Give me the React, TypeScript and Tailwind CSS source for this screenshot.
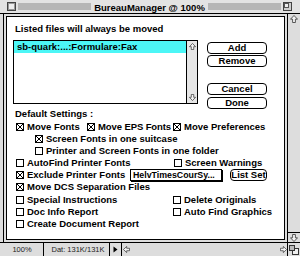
import type { ReactNode } from "react";

function CheckBox({ on }: { on?: boolean }) {
  return (
    <svg width="8" height="8" viewBox="0 0 8 8" className="shrink-0">
      <rect x="0.5" y="0.5" width="7" height="7" fill="white" stroke="black" />
      {on && <path d="M1 1L7 7M7 1L1 7" stroke="black" strokeWidth="1" />}
    </svg>
  );
}

function Opt({ on, label, className = "" }: { on?: boolean; label: string; className?: string }) {
  return (
    <div className={`flex h-[12px] shrink-0 items-center whitespace-nowrap ${className}`}>
      <CheckBox on={on} />
      <span className="ml-[3px]">{label}</span>
    </div>
  );
}

function Btn({ children, className = "" }: { children: ReactNode; className?: string }) {
  return (
    <div
      className={`flex h-[12px] items-center justify-center rounded-[4px] border border-black bg-white leading-[10px] ${className}`}
    >
      {children}
    </div>
  );
}

function Arrow({ dir, size = 8 }: { dir: "up" | "down" | "left" | "right"; size?: number }) {
  const rot = { up: 0, right: 90, down: 180, left: 270 }[dir];
  return (
    <svg width={size} height={size} viewBox="0 0 8 8" className="shrink-0">
      <g transform={`rotate(${rot} 4 4)`}>
        <path
          d="M4 0.5L7.5 4.2H5.4V7.5H2.6V4.2H0.5Z"
          fill="#f4f4f4"
          stroke="#333"
          strokeWidth="0.8"
          strokeLinejoin="miter"
        />
      </g>
    </svg>
  );
}

function ListBox() {
  return (
    <div className="flex h-[64px] w-[185px] shrink-0 border border-black bg-white">
      <div className="flex-1">
        <div className="h-[12px] bg-[#4cf6f6] pl-[3px] leading-[12px] whitespace-nowrap">
          sb-quark:...:Formulare:Fax
        </div>
      </div>
      <div className="flex w-[11px] flex-col items-center justify-between border-l border-black bg-[#e6e6e6] py-[2px]">
        <Arrow dir="up" size={7} />
        <Arrow dir="down" size={7} />
      </div>
    </div>
  );
}

export default function App() {
  return (
    <div className="flex h-[256px] w-[300px] flex-col overflow-hidden bg-[#dddddd] font-['Liberation_Sans',Arial,sans-serif] text-black">
      {/* title bar */}
      <div className="flex h-[14px] shrink-0 items-center border-b border-black bg-[#e3e3e3] pl-[7px] pr-[8px]">
        <svg width="9" height="9" viewBox="0 0 9 9" className="shrink-0">
          <rect x="0.5" y="0.5" width="8" height="8" fill="#cfcfcf" stroke="#444" />
          <rect x="1.5" y="1.5" width="6" height="6" fill="#eeeeee" stroke="#999" />
        </svg>
        <div className="ml-[2px] h-[7px] flex-1 bg-[#b6b6b6]" />
        <div className="h-[13px] px-[3px] text-[9.5px] font-bold leading-[15px] whitespace-nowrap">
          BureauManager @ 100%
        </div>
        <div className="mr-[2px] h-[7px] flex-1 bg-[#b6b6b6]" />
        <svg width="9" height="9" viewBox="0 0 9 9" className="shrink-0">
          <rect x="0.5" y="0.5" width="8" height="8" fill="#cfcfcf" stroke="#444" />
          <rect x="1.5" y="1.5" width="4" height="4" fill="#eeeeee" stroke="#555" />
        </svg>
      </div>

      {/* body */}
      <div className="flex h-[228px] shrink-0">
        <div className="w-[3px] shrink-0" />
        <div className="flex w-[285px] shrink-0 flex-col border-x border-black p-[2px]">
          <div className="flex flex-1 flex-col border border-black bg-white pl-[6px] text-[9.5px] font-bold leading-[12px]">
            <div className="mt-[6px] pl-[2px] whitespace-nowrap">Listed files will always be moved</div>

            <div className="mt-[5px] flex h-[64px] items-start">
              <ListBox />
              <div className="ml-[9px] flex w-[60px] flex-col">
                <Btn className="mt-[2px]">Add</Btn>
                <Btn className="mt-[1px]">Remove</Btn>
                <Btn className="mt-[16px]">Cancel</Btn>
                <Btn className="mt-[2px]">Done</Btn>
              </div>
            </div>

            <div className="mt-[4px] pl-[2px] whitespace-nowrap">Default Settings :</div>

            <div className="mt-[1px] flex flex-col pl-[3px]">
              <div className="flex">
                <Opt on label="Move Fonts" className="w-[71px]" />
                <Opt on label="Move EPS Fonts" className="w-[86px] tracking-[-0.1px]" />
                <Opt on label="Move Preferences" />
              </div>
              <Opt on label="Screen Fonts in one suitcase" className="pl-[19px]" />
              <Opt label="Printer and Screen Fonts in one folder" className="pl-[19px]" />
              <div className="flex">
                <Opt label="AutoFind Printer Fonts" className="w-[158px]" />
                <Opt label="Screen Warnings" />
              </div>
              <div className="flex items-center">
                <Opt on label="Exclude Printer Fonts" className="w-[114px]" />
                <div className="h-[12px] w-[92px] overflow-hidden border border-black bg-white pl-[2px] text-[8.8px] leading-[10px] whitespace-nowrap shadow-[1px_1px_0_0_#000]">
                  HelvTimesCourSy...
                </div>
                <Btn className="ml-[8px] w-[37px] whitespace-nowrap">List Set</Btn>
              </div>
              <Opt on label="Move DCS Separation Files" />
              <div className="mt-[1px] flex">
                <Opt label="Special Instructions" className="w-[157px]" />
                <Opt label="Delete Originals" />
              </div>
              <div className="flex">
                <Opt label="Doc Info Report" className="w-[157px]" />
                <Opt label="Auto Find Graphics" />
              </div>
              <Opt label="Create Document Report" />
            </div>
          </div>
        </div>

        {/* vertical scrollbar */}
        <div className="flex w-[12px] shrink-0 flex-col justify-between">
          <div className="flex justify-center pt-[1px]">
            <Arrow dir="up" />
          </div>
          <div className="flex h-[10px] items-center justify-center border-t border-black">
            <Arrow dir="down" />
          </div>
        </div>
      </div>

      {/* status bar */}
      <div className="flex h-[14px] shrink-0 border-t border-black text-[7.5px] leading-[13px] text-[#222]">
        <div className="w-[44px] shrink-0 border-r border-black pl-[1px] text-center">100%</div>
        <div className="w-[66px] shrink-0 border-r border-black pl-[3px] text-center whitespace-nowrap">
          Dat: 131K/131K
        </div>
        <div className="flex w-[12px] shrink-0 items-center justify-center border-r border-black">
          <svg width="5" height="7" viewBox="0 0 5 7">
            <path d="M0.5 0.5L4.5 3.5L0.5 6.5Z" fill="black" />
          </svg>
        </div>
        <div className="flex items-center pl-[1px]">
          <Arrow dir="left" size={7} />
        </div>
        <div className="flex-1" />
        <div className="flex items-center">
          <Arrow dir="right" size={7} />
        </div>
        <div className="flex w-[13px] shrink-0 items-center justify-center border-l border-black">
          <svg width="10" height="10" viewBox="0 0 10 10">
            <rect x="3.5" y="3.5" width="6" height="6" fill="#eeeeee" stroke="#333" />
            <rect x="0.5" y="0.5" width="5" height="5" fill="#bbbbbb" stroke="#333" />
          </svg>
        </div>
      </div>
    </div>
  );
}
